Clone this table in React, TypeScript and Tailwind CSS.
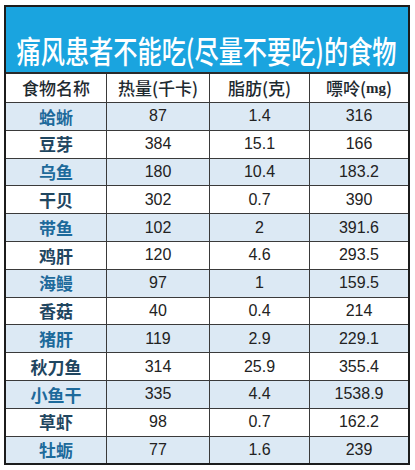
import React from "react";

const rows: [string, string, string, string][] = [
  ["蛤蜥", "87", "1.4", "316"],
  ["豆芽", "384", "15.1", "166"],
  ["乌鱼", "180", "10.4", "183.2"],
  ["干贝", "302", "0.7", "390"],
  ["带鱼", "102", "2", "391.6"],
  ["鸡肝", "120", "4.6", "293.5"],
  ["海鳗", "97", "1", "159.5"],
  ["香菇", "40", "0.4", "214"],
  ["猪肝", "119", "2.9", "229.1"],
  ["秋刀鱼", "314", "25.9", "355.4"],
  ["小鱼干", "335", "4.4", "1538.9"],
  ["草虾", "98", "0.7", "162.2"],
  ["牡蛎", "77", "1.6", "239"],
];

const cjk = "font-['Noto_Sans_CJK_SC',sans-serif]";
const num = "font-['Liberation_Sans',sans-serif]";
const grid = "grid grid-cols-[101px_103px_100px_1fr]";

export default function App() {
  return (
    <div className="h-[470px] w-[415px] bg-white pl-[4px] pt-[5px]">
      <div className="w-[406px] border-2 border-[#1c1c1c]">
        <div className="flex h-[65px] items-end justify-center bg-[#1aa4df] pb-[3px]">
          <h1 className={`${cjk} scale-x-[0.78] whitespace-nowrap text-[31px] font-medium leading-[38px] text-white`}>
            痛风患者不能吃(尽量不要吃)的食物
          </h1>
        </div>

        <div className={`${grid} h-[30px] border-t-2 border-[#2a2a2a] bg-white ${cjk} text-[17px] font-medium text-[#1e2a30]`}>
          <div className="flex items-center justify-center border-r border-[#3a3a3a]">食物名称</div>
          <div className="flex items-center justify-center border-r border-[#3a3a3a]">热量(千卡)</div>
          <div className="flex items-center justify-center border-r border-[#3a3a3a]">脂肪(克)</div>
          <div className="flex items-center justify-center">
            嘌呤(<span className="font-['Liberation_Serif',serif] text-[15px] font-bold">mg</span>)
          </div>
        </div>

        {rows.map(([name, kcal, fat, purine], i) => (
          <div
            key={name}
            className={`${grid} h-[27.8px] border-t border-[#3a3a3a] ${i % 2 === 0 ? "bg-[#dce9f4]" : "bg-white"}`}
          >
            <div
              className={`flex items-center justify-center border-r border-[#3a3a3a] ${cjk} text-[17px] font-bold ${
                i % 2 === 0 ? "text-[#1d6a9b]" : "text-[#1f4660]"
              }`}
            >
              {name}
            </div>
            <div className={`flex items-center justify-center border-r border-[#3a3a3a] ${num} text-[16px] text-[#222]`}>{kcal}</div>
            <div className={`flex items-center justify-center border-r border-[#3a3a3a] ${num} text-[16px] text-[#222]`}>{fat}</div>
            <div className={`flex items-center justify-center ${num} text-[16px] text-[#222]`}>{purine}</div>
          </div>
        ))}
      </div>
    </div>
  );
}
